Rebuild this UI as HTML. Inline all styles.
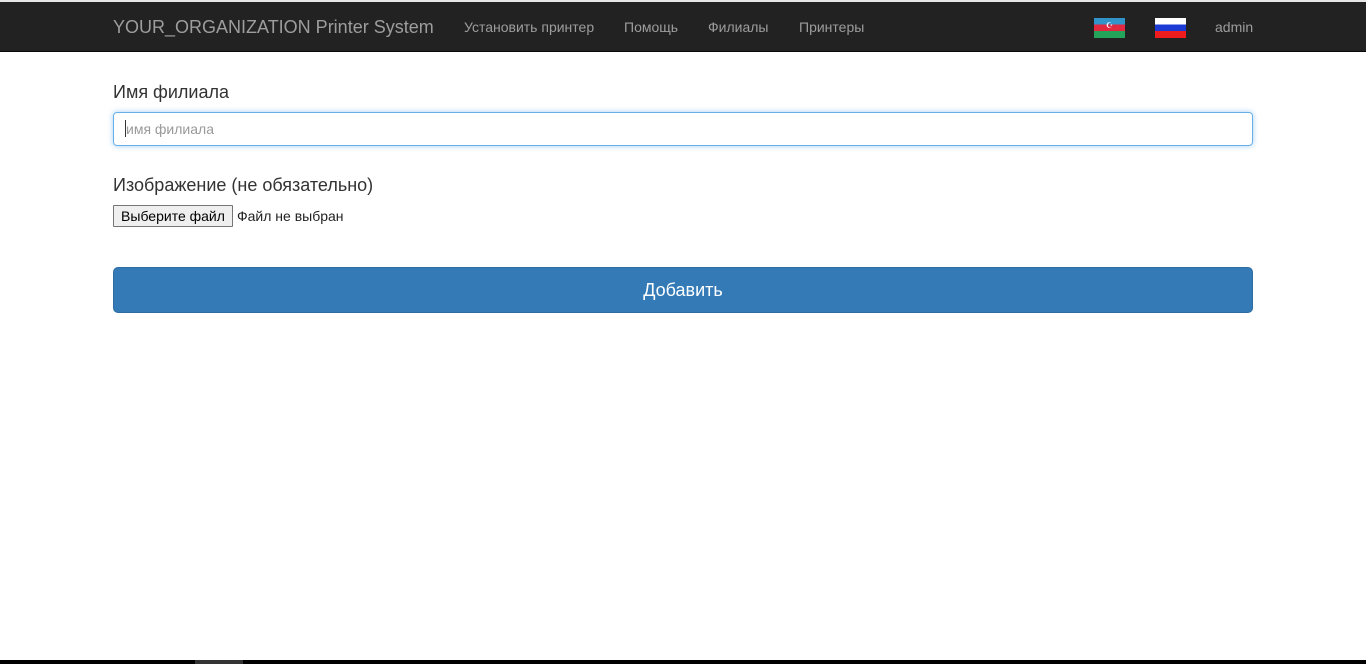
<!DOCTYPE html>
<html><head><meta charset="utf-8"><style>
body{margin:0;width:1366px;height:664px;overflow:hidden;background:#fff;font-family:"Liberation Sans",Arial,sans-serif;position:relative}
.top{position:absolute;left:0;top:0;width:1366px;height:2px;background:#e6e6e6}
.nav{position:absolute;left:0;top:2px;width:1366px;height:49px;background:#222;border-bottom:1px solid #080808}
.nav span{position:absolute;color:#9d9d9d;top:17px;font-size:14px}
.brand{font-size:18px!important;top:15px!important;left:113px}
.flag{position:absolute;top:16px;width:31px;height:20px}
.bottom{position:absolute;left:0;top:660px;width:1366px;height:4px;background:#000}
.bottom i{position:absolute;left:195px;width:48px;height:4px;background:#333}
label{position:absolute;left:113px;font-size:18px;color:#333}
.inp{position:absolute;left:113px;top:112px;width:1138px;height:32px;border:1px solid #66afe9;border-radius:4px;box-shadow:0 0 6px rgba(102,175,233,.6);}
.inp span{position:absolute;left:12px;top:8px;font-size:14px;color:#999}
.inp b{position:absolute;left:11px;top:7px;width:1px;height:17px;background:#333}
.fb{position:absolute;left:113px;top:205px;width:118px;height:20px;border:1px solid #767676;background:#efefef;font-size:14px;line-height:20px;text-align:center;color:#000;border-radius:1px}
.ft{position:absolute;left:237px;top:208px;font-size:14px;color:#222}
.btn{position:absolute;left:113px;top:267px;width:1138px;height:44px;background:#337ab7;border:1px solid #2e6da4;border-radius:5px;color:#fff;font-size:18px;text-align:center;line-height:44px}
</style></head><body>
<div class="top"></div>
<div class="nav">
<span class="brand">YOUR_ORGANIZATION Printer System</span>
<span style="left:464px">Установить принтер</span>
<span style="left:624px">Помощь</span>
<span style="left:708px">Филиалы</span>
<span style="left:799px">Принтеры</span>
<div class="flag" style="left:1094px;background:linear-gradient(#3194c9 0 33%,#e0283f 33% 66%,#24a45a 66%)"><span style="position:absolute;left:12px;top:3px;color:#fff;font-size:8px">☪</span></div>
<div class="flag" style="left:1155px;background:linear-gradient(#fff 0 33%,#1c3bd4 33% 66%,#ee1c1c 66%)"></div>
<span style="left:1215px">admin</span>
</div>
<label style="top:82px">Имя филиала</label>
<div class="inp"><b></b><span>имя филиала</span></div>
<label style="top:175px">Изображение (не обязательно)</label>
<div class="fb">Выберите файл</div>
<div class="ft">Файл не выбран</div>
<div class="btn">Добавить</div>
<div class="bottom"><i></i></div>
</body></html>
